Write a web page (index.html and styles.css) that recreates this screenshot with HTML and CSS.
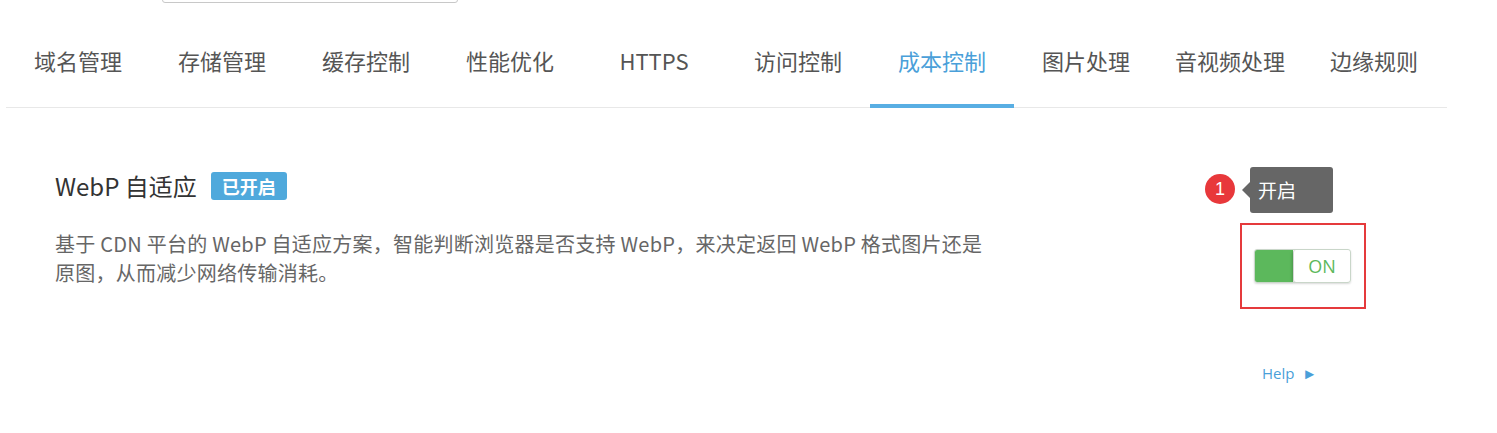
FILE: index.html
```html
<!DOCTYPE html>
<html lang="zh-CN">

<head>
  <meta charset="UTF-8" />
  <meta name="viewport" content="width=device-width, initial-scale=1.0" />
  <title>成本控制</title>
  <link rel="stylesheet" href="styles.css">
</head>

<body>
  <div class="top">
    <div class="search"></div>
  </div>

  <!-- 功能标签 -->
  <ul class="tabs">
    <li class="tab">域名管理</li>
    <li class="tab">存储管理</li>
    <li class="tab">缓存控制</li>
    <li class="tab">性能优化</li>
    <li class="tab">HTTPS</li>
    <li class="tab">访问控制</li>
    <li class="tab active">成本控制</li>
    <li class="tab">图片处理</li>
    <li class="tab">音视频处理</li>
    <li class="tab">边缘规则</li>
  </ul>

  <!-- WebP 设置 -->
  <div class="setting">
    <div class="setting-info">
      <h3 class="setting-title">WebP 自适应 <span class="badge">已开启</span></h3>
      <p class="setting-desc">基于 CDN 平台的 WebP 自适应方案，智能判断浏览器是否支持 WebP，来决定返回 WebP 格式图片还是原图，从而减少网络传输消耗。</p>
    </div>
    <div class="setting-side">
      <div class="switch-wrap">
        <div class="switch">
          <span class="switch-on"></span>
          <span class="switch-knob">ON</span>
        </div>
        <!-- 标注 -->
        <span class="mark-box"></span>
        <span class="mark-num">1</span>
        <span class="mark-tip">开启</span>
      </div>
      <a class="help" href="#">Help <i>&#9658;</i></a>
    </div>
  </div>
</body>

</html>
```

FILE: styles.css
```css
body {
  margin: 0;
  padding: 0;
  font-family: "Noto Sans CJK SC", "Noto Sans", sans-serif;
  color: #333;
  background: #fff;
}

/* 顶部搜索框（只露出底边） */
.top {
  display: flow-root;
  height: 0;
}

.top .search {
  width: 294px;
  height: 30px;
  margin: -29px 0 0 162px;
  border: 1px solid #c8c8c8;
  border-radius: 3px;
}

/* 标签栏 */
.tabs {
  display: flex;
  width: 1441px;
  margin: 0 0 0 6px;
  padding: 0;
  list-style: none;
  border-bottom: 1px solid #e8e8e8;
}

.tab {
  width: 144px;
  padding: 45px 0 29px;
  margin-bottom: -1px;
  text-align: center;
  font-size: 22px;
  line-height: 30px;
  color: #555;
  border-bottom: 4px solid transparent;
}

.tab.active {
  color: #4a9fd9;
  border-bottom-color: #58aee3;
}

/* 设置项 */
.setting {
  display: flex;
  padding: 63px 0 0 55px;
}

.setting-info {
  flex: 0 0 940px;
}

.setting-title {
  display: flex;
  align-items: center;
  margin: 0;
  font-size: 24px;
  line-height: 30px;
  font-weight: normal;
  color: #333;
}

.badge {
  margin-left: 14px;
  padding: 0 11px;
  height: 28px;
  line-height: 28px;
  font-size: 18px;
  font-weight: bold;
  color: #fff;
  background-color: #4fa9dc;
  border-radius: 3px;
}

.setting-desc {
  width: 940px;
  margin: 28px 0 0;
  font-size: 20px;
  line-height: 29px;
  letter-spacing: .25px;
  color: #666;
}

.setting-side {
  margin-left: 259px;
  padding-top: 78px;
}

/* 开关 */
.switch-wrap {
  position: relative;
  width: 97px;
  height: 34px;
}

.switch {
  display: flex;
  height: 32px;
  border: 1px solid #c9d6c9;
  border-radius: 3px;
  overflow: hidden;
  box-shadow: 0 1px 2px rgba(0, 0, 0, .15);
}

.switch-on {
  width: 38px;
  background-color: #5cb85c;
}

.switch-knob {
  flex: 1;
  text-align: center;
  line-height: 32px;
  font-family: "Open Sans", sans-serif;
  font-size: 18px;
  color: #5cb85c;
  background: #fff;
  border-left: 1px solid #d5d5d5;
  border-radius: 3px;
  box-shadow: -1px 1px 3px rgba(0, 0, 0, .2);
}

.mark-box {
  position: absolute;
  left: -14px;
  top: -26px;
  width: 122px;
  height: 82px;
  border: 2px solid #e53a3c;
}

.mark-num {
  position: absolute;
  left: -49px;
  top: -75px;
  width: 30px;
  height: 30px;
  line-height: 30px;
  border-radius: 50%;
  text-align: center;
  font-family: "Liberation Sans", sans-serif;
  font-size: 18px;
  color: #fff;
  background-color: #e8383b;
}

.mark-tip {
  position: absolute;
  left: -4px;
  top: -82px;
  width: 75px;
  height: 46px;
  padding-left: 8px;
  line-height: 46px;
  font-size: 19px;
  color: #fff;
  background-color: #666;
  border-radius: 3px;
}

.mark-tip::before {
  content: "";
  position: absolute;
  left: -8px;
  top: 15px;
  border-style: solid;
  border-width: 8px 8px 8px 0;
  border-color: transparent #666 transparent transparent;
}

.help {
  display: inline-block;
  margin: 80px 0 0 8px;
  font-family: "Open Sans", sans-serif;
  font-size: 15px;
  line-height: 20px;
  color: #4a9fd9;
  text-decoration: none;
}

.help i {
  font-style: normal;
  font-size: 15px;
  margin-left: 4px;
}
```
